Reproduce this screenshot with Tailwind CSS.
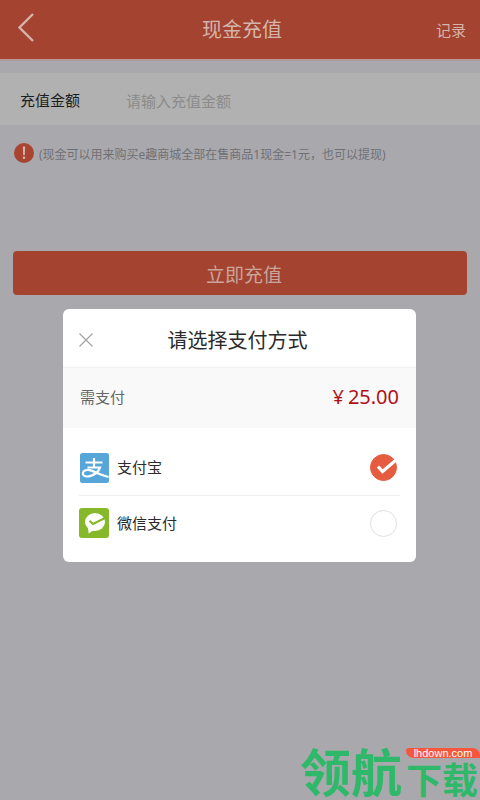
<!DOCTYPE html>
<html lang="zh-CN">
<head>
<meta charset="utf-8">
<meta name="viewport" content="width=device-width, initial-scale=1">
<title>现金充值</title>
<script src="https://cdn.jsdelivr.net/npm/@tailwindcss/browser@4"></script>
</head>
<body class="relative min-h-screen overflow-x-hidden bg-[#a9a9ad] font-['Noto_Sans','Noto_Sans_CJK_SC',sans-serif] text-[#2b2b2b]">
  <header class="grid h-[61px] grid-cols-[1fr_auto_1fr] items-center border-b-2 border-[#b59a9c] bg-[#a34330] px-4 text-[#d5b5ab]">
    <button type="button" aria-label="返回" class="justify-self-start pb-1">
      <svg class="h-8 w-5" viewBox="0 0 20 32" fill="none" stroke="currentColor" stroke-width="2.4"><path d="M17 2 3.500 15.500 17 29"/></svg>
    </button>
    <h1 class="pl-1 text-xl leading-7">现金充值</h1>
    <a href="#" class="-mr-0.5 justify-self-end text-[15px] leading-6">记录</a>
  </header>

  <main>
    <div class="mt-3 flex h-[52px] items-center bg-[#b1b1b1] px-5">
      <label for="amount" class="w-[106px] shrink-0 pt-0.5 text-[15px] text-[#1d1d1d]">充值金额</label>
      <input id="amount" type="text" inputmode="decimal" placeholder="请输入充值金额" class="min-w-0 flex-1 bg-transparent pt-1 text-[15px] outline-none placeholder:text-[#8b8b8b]">
    </div>
    <p class="flex items-center gap-[5px] px-3.5 pt-[18px] text-xs text-[#707074]">
      <svg class="size-5 shrink-0" viewBox="0 0 20 20" aria-hidden="true"><circle cx="10" cy="10" r="10" fill="#a94431"/><path d="M8.8 3.600h2.400l-.4 8.600H9.200z" fill="#d0b5ae"/><circle cx="10" cy="14.8" r="1.300" fill="#d0b5ae"/></svg>
      <span class="pt-1">(现金可以用来购买e趣商城全部在售商品1现金=1元，也可以提现)</span>
    </p>
    <div class="px-[13px] pt-[88px]">
      <button type="button" class="h-11 w-full rounded bg-[#a34330] pt-1 pl-2 text-[19px] text-[#c9a59b]">立即充值</button>
    </div>
  </main>

  <div class="absolute inset-0 pt-[309px] pr-16 pl-[63px]">
    <section role="dialog" aria-labelledby="pay-title" class="overflow-hidden rounded-md bg-white pb-2.5">
      <div class="grid h-[58px] grid-cols-[1fr_auto_1fr] items-center pt-1 pr-5 pl-4">
        <button type="button" aria-label="关闭" class="justify-self-start">
          <svg class="size-3.5" viewBox="0 0 14 14" fill="none" stroke="#a3a3a3" stroke-width="1.2"><path d="M.5.5l13 13M13.5.5l-13 13"/></svg>
        </button>
        <h2 id="pay-title" class="pt-0.5 text-xl leading-7">请选择支付方式</h2>
      </div>
      <div class="flex h-[61px] items-center justify-between border-t border-[#f1f1f1] bg-[#f9f9f9] px-[17px] pb-0.5">
        <span class="text-[15px] text-[#666]">需支付</span>
        <span class="flex items-center gap-1 text-xl text-[#b01017]"><span>¥</span><span>25.00</span></span>
      </div>
      <form class="px-4 pt-3">
        <label class="flex h-14 items-center gap-2 border-b border-[#f3efec] pr-[3px]">
          <svg class="size-[30px]" viewBox="0 0 30 30" fill="none" aria-hidden="true"><rect x="1" width="29" height="30" rx="2.5" fill="#57a6da"/><path d="M6.500 9.500h17M15 5v9M8.500 14.500h12.500C19.500 18.500 16 22.300 10 23.300 6 24 3.500 22.500 3.800 20 4.300 17.200 8.500 16.200 12.500 17.600 17 19.300 22 22 29.500 24" stroke="#fff" stroke-width="2.200"/></svg>
          <span class="flex-1 text-[15px]">支付宝</span>
          <span class="relative size-[27px]">
            <input type="radio" name="pay" checked class="peer block size-[27px] appearance-none rounded-full border border-[#dedede] checked:border-[#e65c41] checked:bg-[#e65c41]">
            <svg class="pointer-events-none absolute inset-0 hidden peer-checked:block" viewBox="0 0 27 27" fill="none" stroke="#fff" stroke-width="3.200" aria-hidden="true"><path d="M8 12.500 12.500 17.500 25.500 6.500"/></svg>
          </span>
        </label>
        <label class="flex h-14 items-center gap-2 pr-[3px] pb-0.5">
          <svg class="size-[30px]" viewBox="0 0 30 30" fill="none" aria-hidden="true"><rect width="30" height="30" rx="3" fill="#86b929"/><ellipse cx="16" cy="14" rx="10" ry="9" fill="#fff"/><path d="M9 19.500 9.600 25.500 15 22z" fill="#fff"/><path d="M10.500 12.800 14 16 26 10" stroke="#86b929" stroke-width="2.200"/></svg>
          <span class="flex-1 text-[15px]">微信支付</span>
          <span class="relative size-[27px]">
            <input type="radio" name="pay" class="peer block size-[27px] appearance-none rounded-full border border-[#dedede] checked:border-[#e65c41] checked:bg-[#e65c41]">
            <svg class="pointer-events-none absolute inset-0 hidden peer-checked:block" viewBox="0 0 27 27" fill="none" stroke="#fff" stroke-width="3.200" aria-hidden="true"><path d="M8 12.500 12.500 17.500 25.500 6.500"/></svg>
          </span>
        </label>
      </form>
    </section>
  </div>

  <div class="absolute right-0 bottom-0 flex w-[180px] items-end font-['Noto_Sans_CJK_SC',sans-serif] font-bold whitespace-nowrap text-[#2fb869]">
    <span class="pb-1 text-[51px] leading-[51px]">领航</span>
    <span class="flex flex-col gap-0.5">
      <span class="ml-1 flex h-2.5 w-[74px] items-center justify-center rounded-tl-[3px] rounded-tr-lg rounded-bl-lg bg-[#f4573b] font-['Liberation_Sans',sans-serif] text-[11px] leading-[10px] font-normal text-white">lhdown.com</span>
      <span class="ml-1 pb-1 text-4xl leading-9">下载</span>
    </span>
  </div>
</body>
</html>
